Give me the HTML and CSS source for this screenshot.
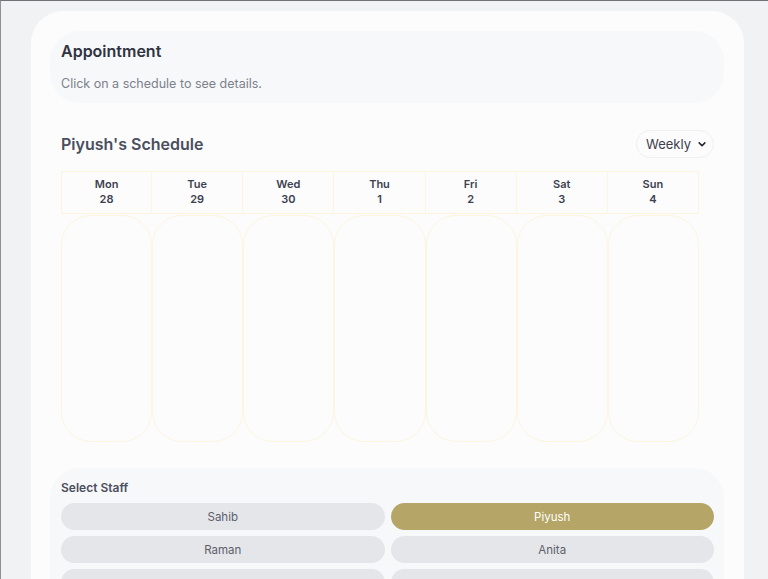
FILE: index.html
```html
<!DOCTYPE html>
<html>
<head>
<meta charset="utf-8">
<link rel="stylesheet" href="styles.css">
</head>
<body>
<div class="frame">
  <div class="card">
    <section class="intro">
      <h1 class="intro-title">Appointment</h1>
      <p class="intro-text">Click on a schedule to see details.</p>
    </section>

    <section class="schedule">
      <div class="schedule-head">
        <h2 class="schedule-title">Piyush's Schedule</h2>
        <div class="select">
          <span>Weekly</span>
          <svg class="chev" width="10" height="7" viewBox="0 0 10 7"><path d="M1.5 1.5 L5 5 L8.5 1.5" fill="none" stroke="#23262f" stroke-width="2" stroke-linecap="round" stroke-linejoin="round"/></svg>
        </div>
      </div>
      <div class="days">
        <div class="day-head"><span>Mon</span><span>28</span></div>
        <div class="day-head"><span>Tue</span><span>29</span></div>
        <div class="day-head"><span>Wed</span><span>30</span></div>
        <div class="day-head"><span>Thu</span><span>1</span></div>
        <div class="day-head"><span>Fri</span><span>2</span></div>
        <div class="day-head"><span>Sat</span><span>3</span></div>
        <div class="day-head"><span>Sun</span><span>4</span></div>
        <div class="day-body"></div>
        <div class="day-body"></div>
        <div class="day-body"></div>
        <div class="day-body"></div>
        <div class="day-body"></div>
        <div class="day-body"></div>
        <div class="day-body"></div>
      </div>
    </section>

    <section class="staff">
      <h3 class="staff-title">Select Staff</h3>
      <div class="staff-grid">
        <button class="pill">Sahib</button>
        <button class="pill active">Piyush</button>
        <button class="pill">Raman</button>
        <button class="pill">Anita</button>
        <button class="pill">&nbsp;</button>
        <button class="pill">&nbsp;</button>
      </div>
    </section>
  </div>
</div>
</body>
</html>
```

FILE: styles.css
```css
* { box-sizing: border-box; }
html, body {
  margin: 0;
  height: 100%;
  overflow: hidden;
}
body {
  background: #f1f2f4;
  font-family: Inter, "Open Sans", sans-serif;
  color: #3d4150;
  border-top: 1px solid #6f7175;
  border-left: 1px solid #8e9094;
}
.frame {
  padding: 10px 24px 0 30px;
}
.card {
  background: #fcfcfd;
  border-radius: 32px;
  padding: 20px 20px 0 19px;
  min-height: 700px;
}
.intro {
  background: #f7f8fa;
  border-radius: 30px;
  height: 72px;
  padding: 10px 11px 0;
}
.intro-title {
  margin: 0;
  font-size: 16px;
  font-weight: 600;
  color: #2f3342;
  line-height: 20px;
}
.intro-text {
  margin: 15px 0 0;
  font-size: 12.5px;
  color: #7d818c;
  line-height: 16px;
}
.schedule {
  padding: 27px 10px 0 11px;
}
.schedule-head {
  display: flex;
  justify-content: space-between;
  align-items: center;
  height: 28px;
}
.schedule-title {
  margin: 0;
  font-size: 16px;
  font-weight: 600;
  color: #4a4e5d;
}
.select {
  display: flex;
  align-items: center;
  gap: 7px;
  height: 28px;
  width: 78px;
  padding: 0 7px 0 9px;
  border: 1px solid #eef0f2;
  border-radius: 14px;
  font-size: 13px;
  color: #3c404c;
}
.chev { margin-top: 1px; }
.days {
  margin-top: 13px;
  width: 638px;
  display: grid;
  grid-template-columns: repeat(7, 1fr);
  grid-template-rows: 43px 228px;
}
.day-head {
  border: 1px solid #fdf5df;
  margin-left: -1px;
  display: flex;
  flex-direction: column;
  align-items: center;
  justify-content: center;
  font-size: 11px;
  font-weight: 600;
  color: #3d4150;
  line-height: 15px;
  padding-bottom: 1px;
}
.day-head:first-child { margin-left: 0; }
.day-body {
  border: 1px solid #fdf5df;
  border-radius: 30px;
  margin-top: 1px;
}
.staff {
  margin-top: 26px;
  background: #f7f8fa;
  border-radius: 30px;
  padding: 12px 10px 20px 11px;
}
.staff-title {
  margin: 0 0 7px;
  font-size: 12px;
  font-weight: 600;
  color: #4a4e5d;
  line-height: 16px;
}
.staff-grid {
  display: grid;
  grid-template-columns: 1fr 1fr;
  column-gap: 6px;
  row-gap: 6px;
}
.pill {
  height: 27px;
  border: none;
  border-radius: 14px;
  background: #e5e6e9;
  font-family: inherit;
  font-size: 11.5px;
  color: #5c606d;
}
.pill.active {
  background: #b5a667;
  color: #ffffff;
}
```
